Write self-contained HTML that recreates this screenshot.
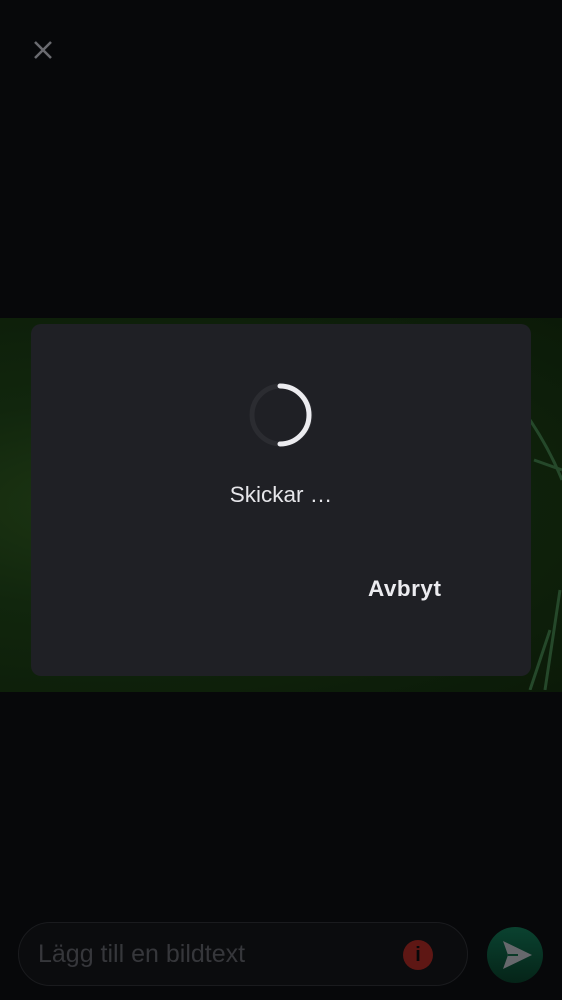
<!DOCTYPE html>
<html><head><style>
body{margin:0;width:562px;height:1000px;background:#07080a;position:relative;overflow:hidden;font-family:"Liberation Sans",sans-serif}
.img{position:absolute;left:0;top:318px;width:562px;height:374px;background:radial-gradient(ellipse at 20% 50%,#1d3613 0%,#11260d 40%,#0b1a08 100%)}
.dlg{position:absolute;left:31px;top:324px;width:500px;height:352px;background:#1f2025;border-radius:10px}
.t{position:absolute;left:0;width:562px;text-align:center;top:482px;color:#e6e6ea;font-size:22.5px}
.b{position:absolute;left:368px;top:576px;color:#ececf0;font-size:22.5px;font-weight:bold;letter-spacing:0.5px}
.inp{position:absolute;left:18px;top:922px;width:450px;height:64px;border:1px solid #1a1b1e;border-radius:33px;background:#0b0c0e;box-sizing:border-box}
.ph{position:absolute;left:38px;top:940px;color:#36373b;font-size:25px}
</style></head><body>
<svg style="position:absolute;left:33px;top:40px" width="20" height="20"><path d="M2 2L18 18M18 2L2 18" stroke="#6a6b70" stroke-width="2.5"/></svg>
<div class="img"></div>
<svg style="position:absolute;left:520px;top:400px" width="42" height="290"><path d="M10 20 Q30 50 42 80 M14 60 L42 70 M30 230 L10 290 M40 190 L25 290" stroke="#25482a" stroke-width="3" fill="none"/></svg>
<div class="dlg"></div>
<svg style="position:absolute;left:248px;top:382px" width="66" height="66"><circle cx="33" cy="33" r="29" fill="none" stroke="#2b2c31" stroke-width="5"/><path d="M32 4 A29 29 0 0 1 32 62" fill="none" stroke="#ececf0" stroke-width="5" stroke-linecap="round"/></svg>
<div class="t">Skickar …</div>
<div class="b">Avbryt</div>
<div class="inp"></div>
<div class="ph">Lägg till en bildtext</div>
<div style="position:absolute;left:403px;top:940px;width:30px;height:30px;border-radius:50%;background:#5e1714;color:#07080a;font-weight:bold;font-size:20px;text-align:center;line-height:30px">i</div>
<div style="position:absolute;left:487px;top:927px;width:56px;height:56px;border-radius:50%;background:linear-gradient(#0a4230,#052418)"></div>
<svg style="position:absolute;left:500px;top:938px" width="34" height="34"><path d="M3 3 L32 17 L3 31 L8 17 Z" fill="#66686c"/><path d="M8 17 L18 17" stroke="#0b3a28" stroke-width="2"/></svg>
</body></html>
